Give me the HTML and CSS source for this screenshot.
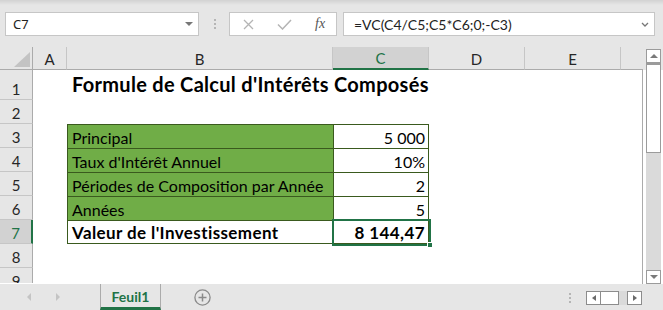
FILE: index.html
```html
<!doctype html>
<html>
  <head>
    <meta charset="utf-8">
    <title>Feuil1</title>
    <link rel="stylesheet" href="styles.css">
  </head>
  <body>
    <div class="topbar">
      <div class="namebox"><span>C7</span><i class="caret"></i></div>
      <div class="grip"><i></i><i></i><i></i></div>
      <div class="fxbox">
        <svg class="ico-x" width="11" height="11" viewBox="0 0 11 11"><path d="M1 1 L10 10 M10 1 L1 10" stroke="#b4b4b4" stroke-width="1.3" fill="none"/></svg>
        <svg class="ico-ok" width="15" height="11" viewBox="0 0 15 11"><path d="M1 5.5 L5.5 10 L14 1" stroke="#b4b4b4" stroke-width="1.5" fill="none"/></svg>
        <span class="fx">fx</span>
      </div>
      <div class="formula">
        <span>=VC(C4/C5;C5*C6;0;-C3)</span>
        <svg width="8" height="5" viewBox="0 0 8 5"><path d="M1 1 L4 4 L7 1" stroke="#777" stroke-width="1.3" fill="none"/></svg>
      </div>
    </div>

    <div class="main">
      <div class="sheet">
        <div class="ch corner"><i></i></div>
        <div class="ch">A</div>
        <div class="ch">B</div>
        <div class="ch sel">C</div>
        <div class="ch">D</div>
        <div class="ch">E</div>
        <div class="ch blank"></div>
        <div class="ch blank"></div>

        <div class="rh r1">1</div>
        <div class="rh r2">2</div>
        <div class="rh r3">3</div>
        <div class="rh r4">4</div>
        <div class="rh r5">5</div>
        <div class="rh r6">6</div>
        <div class="rh r7 sel">7</div>
        <div class="rh r8">8</div>
        <div class="rh r9 cut">9</div>

        <div class="title r1">Formule de Calcul d'Intérêts Composés</div>

        <div class="tc cb fill r3">Principal</div>
        <div class="tc cc r3">5 000</div>
        <div class="tc cb fill r4">Taux d'Intérêt Annuel</div>
        <div class="tc cc r4">10%</div>
        <div class="tc cb fill r5">Périodes de Composition par Année</div>
        <div class="tc cc r5">2</div>
        <div class="tc cb fill r6">Années</div>
        <div class="tc cc r6">5</div>
        <div class="tc cb last bold r7">Valeur de l'Investissement</div>
        <div class="tc cc last bold r7">8 144,47<div class="selbox"><i class="handle"></i></div></div>

        <div class="edge"></div>
        <div class="bottomline"></div>
      </div>

      <div class="vscroll">
        <div class="sbtn"><i class="tri-up"></i></div>
        <div class="thumb"></div>
        <div class="track"></div>
        <div class="sbtn"><i class="tri-down"></i></div>
      </div>
    </div>

    <div class="tabs">
      <div class="nav"><i class="nav-l"></i><i class="nav-r"></i></div>
      <div class="tab">Feuil1</div>
      <div class="add">
        <svg width="17" height="17" viewBox="0 0 17 17"><circle cx="8.5" cy="8.5" r="7.6" stroke="#8a8a8a" stroke-width="1.3" fill="none"/><path d="M8.5 4.5 V12.5 M4.5 8.5 H12.5" stroke="#8a8a8a" stroke-width="1.5"/></svg>
      </div>
      <div class="spacer"></div>
      <div class="grip small"><i></i><i></i><i></i></div>
      <div class="hscroll">
        <div class="hbtn"><i class="tri-left"></i></div>
        <div class="hthumb"></div>
        <div class="htrack"></div>
        <div class="hbtn"><i class="tri-right"></i></div>
      </div>
    </div>
  </body>
</html>
```

FILE: styles.css
```css
* {
  box-sizing: border-box;
}
body {
  margin: 0;
  width: 663px;
  height: 310px;
  overflow: hidden;
  background: #e6e6e6;
  font-family: Lato, sans-serif;
  color: #000;
}
i {
  display: block;
}

/* formula bar */
.topbar {
  height: 47px;
  display: flex;
  align-items: flex-start;
  padding: 12px 0 0 5px;
  background: linear-gradient(#d2d2d2, #e6e6e6 5px);
}
.namebox, .fxbox, .formula {
  height: 24px;
  background: #fff;
  border: 1px solid #c6c6c6;
  display: flex;
  align-items: center;
}
.namebox {
  width: 194px;
  justify-content: space-between;
  padding: 0 5px 0 7px;
  font-family: "Noto Sans", sans-serif;
  font-size: 13px;
  color: #222;
}
.caret {
  width: 0;
  height: 0;
  border-left: 4px solid transparent;
  border-right: 4px solid transparent;
  border-top: 4px solid #777;
}
.grip {
  display: flex;
  flex-direction: column;
  gap: 2px;
  margin: 7px 13px 0 15px;
}
.grip i {
  width: 2px;
  height: 2px;
  background: #b5b5b5;
}
.fxbox {
  width: 108px;
  padding-left: 13px;
}
.ico-ok {
  margin-left: 23px;
}
.fx {
  margin-left: 23px;
  font-family: "Liberation Serif", serif;
  font-style: italic;
  font-size: 14px;
  color: #555;
}
.formula {
  width: 312px;
  margin-left: 6px;
  justify-content: space-between;
  padding: 0 5px 0 10px;
  font-size: 14px;
  color: #222;
}

/* sheet */
.main {
  display: flex;
  height: 237px;
}
.sheet {
  width: 643px;
  display: grid;
  grid-template-columns: 33px 34px 266px 96px 96px 96px 21px 1px;
  grid-template-rows: 23px 30px repeat(7, 24px) 15px 1px;
  background: #fff;
}
.ch {
  background: #e6e6e6;
  border-right: 1px solid #c6c6c6;
  border-bottom: 1px solid #ababab;
  display: flex;
  align-items: center;
  justify-content: center;
  padding-top: 1px;
  font-size: 15px;
  color: #262626;
}
.ch.blank {
  border-right: 0;
}
.ch.sel {
  background: #d2d2d2;
  color: #217346;
  border-bottom: 2px solid #217346;
}
.corner {
  border-right-color: #ababab;
  align-items: flex-end;
  justify-content: flex-end;
  padding: 0 2px 2px 0;
}
.corner i {
  width: 0;
  height: 0;
  border-left: 16px solid transparent;
  border-bottom: 15px solid #c3c3c3;
}
.rh {
  grid-column: 1;
  background: #e6e6e6;
  border-right: 1px solid #ababab;
  border-bottom: 1px solid #c6c6c6;
  display: flex;
  align-items: flex-end;
  justify-content: center;
  padding-bottom: 1px;
  font-size: 15px;
  line-height: 18px;
  color: #262626;
}
.rh.sel {
  background: #d2d2d2;
  color: #217346;
  border-right: 2px solid #217346;
}
.rh.cut {
  align-items: flex-start;
  padding: 4px 0 0;
  border-bottom: 0;
  overflow: hidden;
}
.r1 { grid-row: 2; }
.r2 { grid-row: 3; }
.r3 { grid-row: 4; }
.r4 { grid-row: 5; }
.r5 { grid-row: 6; }
.r6 { grid-row: 7; }
.r7 { grid-row: 8; }
.r8 { grid-row: 9; }
.r9 { grid-row: 10; }

.title {
  grid-column: 3 / 5;
  display: flex;
  align-items: flex-end;
  padding: 0 0 4px 5px;
  font-size: 20px;
  letter-spacing: 0.3px;
  font-weight: bold;
  white-space: nowrap;
}
.tc {
  display: flex;
  align-items: flex-end;
  padding-bottom: 1px;
  font-size: 16px;
  line-height: 19px;
  white-space: nowrap;
  border-top: 1px solid #3a5a1e;
  border-left: 1px solid #3a5a1e;
}
.cb {
  grid-column: 3;
  padding-left: 4px;
}
.cc {
  grid-column: 4;
  justify-content: flex-end;
  padding-right: 3px;
  border-right: 1px solid #3a5a1e;
  position: relative;
}
.fill {
  background: #70ad47;
}
.last {
  border-bottom: 1px solid #3a5a1e;
}
.bold {
  font-weight: bold;
  font-size: 17px;
  letter-spacing: 0.4px;
}
.selbox {
  position: absolute;
  left: -2px;
  top: -2px;
  right: -3px;
  bottom: -3px;
  border: 2px solid #217346;
}
.handle {
  position: absolute;
  right: -4px;
  bottom: -4px;
  width: 6px;
  height: 6px;
  background: #217346;
  border: 1px solid #fff;
}
.edge {
  grid-column: 8;
  grid-row: 2 / 12;
  background: #ababab;
}
.bottomline {
  grid-column: 1 / -1;
  grid-row: 12;
  background: #ababab;
}

/* vertical scrollbar */
.vscroll {
  width: 20px;
  display: flex;
  flex-direction: column;
  padding: 2px 2px 0 3px;
  background: linear-gradient(#e6e6e6 23px, #fff 23px);
}
.sbtn {
  height: 14px;
  border: 1px solid #9b9b9b;
  background: #fff;
  display: flex;
  align-items: center;
  justify-content: center;
}
.thumb {
  height: 90px;
  border: 1px solid #9b9b9b;
  border-top-width: 2px;
  background: #fff;
}
.track {
  flex: 1;
  background: #dadada;
}
.tri-up, .tri-down {
  width: 0;
  height: 0;
  border-left: 4px solid transparent;
  border-right: 4px solid transparent;
}
.tri-up {
  border-bottom: 4px solid #7a7a7a;
}
.tri-down {
  border-top: 4px solid #7a7a7a;
}

/* sheet tabs */
.tabs {
  height: 26px;
  display: flex;
  background: #e6e6e6;
}
.nav {
  width: 100px;
  display: flex;
  align-items: center;
  padding: 0 0 1px 27px;
}
.nav-l, .nav-r {
  width: 0;
  height: 0;
  border-top: 4px solid transparent;
  border-bottom: 4px solid transparent;
}
.nav-l {
  border-right: 4px solid #c4c4c4;
}
.nav-r {
  margin-left: 25px;
  border-left: 4px solid #c4c4c4;
}
.tab {
  width: 61px;
  border-left: 1px solid #ababab;
  border-right: 1px solid #ababab;
  border-bottom: 3px solid #217346;
  display: flex;
  align-items: center;
  justify-content: center;
  padding-top: 2px;
  font-size: 14px;
  font-weight: bold;
  color: #217346;
}
.add {
  margin-left: 33px;
  display: flex;
  align-items: center;
}
.spacer {
  flex: 1;
}
.grip.small {
  margin: 9px 15px 0 0;
}
.hscroll {
  display: flex;
  height: 14px;
  margin: 7px 21px 0 0;
}
.hbtn {
  width: 15px;
  border: 1px solid #8c8c8c;
  background: #fff;
  display: flex;
  align-items: center;
  justify-content: center;
}
.hthumb {
  width: 18px;
  border: 1px solid #8c8c8c;
  border-left: 0;
  background: #fff;
}
.htrack {
  width: 8px;
  background: #dadada;
}
.tri-left, .tri-right {
  width: 0;
  height: 0;
  border-top: 3.5px solid transparent;
  border-bottom: 3.5px solid transparent;
}
.tri-left {
  border-right: 4px solid #6a6a6a;
}
.tri-right {
  border-left: 4px solid #6a6a6a;
}
```
